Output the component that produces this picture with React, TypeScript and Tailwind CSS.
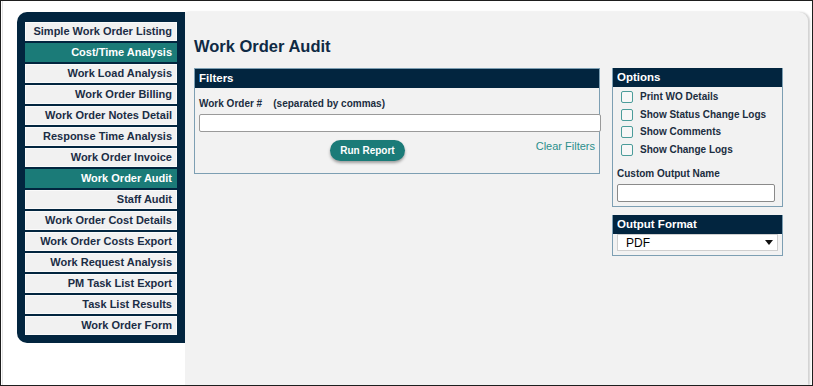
import React from "react";

const items = [
  { t: "Simple Work Order Listing" },
  { t: "Cost/Time Analysis", a: true },
  { t: "Work Load Analysis" },
  { t: "Work Order Billing" },
  { t: "Work Order Notes Detail" },
  { t: "Response Time Analysis" },
  { t: "Work Order Invoice" },
  { t: "Work Order Audit", a: true },
  { t: "Staff Audit" },
  { t: "Work Order Cost Details" },
  { t: "Work Order Costs Export" },
  { t: "Work Request Analysis" },
  { t: "PM Task List Export" },
  { t: "Task List Results" },
  { t: "Work Order Form" },
];

const opts = ["Print WO Details", "Show Status Change Logs", "Show Comments", "Show Change Logs"];

export default function App() {
  return (
    <div
      className="w-[813px] h-[386px] border border-[#1e1e1e] bg-white overflow-hidden flex"
      style={{ fontFamily: '"Liberation Sans", Arial, sans-serif' }}
    >
      <div className="w-[2px] border-r border-[#e4e4e4] mr-[14px]" />
      <div className="mt-[11px] w-[168px] h-[331px] bg-[#02253f] rounded-l-[10px] pt-[10px] pl-[8px] pr-[8px] flex flex-col gap-[2px]">
        {items.map((it) => (
          <div
            key={it.t}
            className={
              "h-[19px] flex items-center justify-end pr-[4px] text-[11px] font-bold leading-none border whitespace-nowrap " +
              (it.a
                ? "bg-[#1b7b78] text-white border-[#1b7b78]"
                : "bg-[#f1f1f1] text-[#1b2d45] border-[#fafafa]")
            }
          >
            {it.t}
          </div>
        ))}
      </div>
      <div className="mt-[11px] flex-1 mr-[4px] bg-[#f2f2f2] rounded-tr-[9px] shadow-[2px_0_2px_rgba(0,0,0,0.18)] pl-[9px] pt-[24px]">
        <div className="text-[16.5px] font-bold text-[#0f2a44] leading-[20px]">Work Order Audit</div>
        <div className="flex gap-[12px] mt-[12px] items-start">
          <div className="w-[406px] h-[106px] border border-[#7d9fb3] relative">
            <div className="h-[19px] bg-[#02253f] text-white text-[11.5px] font-bold pl-[4px] flex items-center">Filters</div>
            <div className="pl-[4px] pt-[11px] text-[10px] font-bold text-[#1b2d3f] leading-none whitespace-pre">
              {"Work Order #    (separated by commas)"}
            </div>
            <div className="absolute left-[4px] top-[45px] w-[402px] h-[18px] bg-white border border-[#9a9a9a] rounded-[2px]" />
            <div className="absolute left-[135px] top-[71px] w-[75px] h-[21px] rounded-full bg-[#1b7b78] text-white text-[10px] font-bold flex items-center justify-center shadow-[0_2px_3px_rgba(0,0,0,0.35)]">
              Run Report
            </div>
            <div className="absolute right-[4px] top-[72px] text-[11px] text-[#2b8f8c] leading-none">Clear Filters</div>
          </div>
          <div className="flex flex-col gap-[8px]">
            <div className="w-[171px] h-[139px] border border-[#7d9fb3] border-t-0 relative">
              <div className="h-[19px] bg-[#02253f] text-white text-[11.5px] font-bold pl-[4px] flex items-center">Options</div>
              <div className="flex flex-col pt-[4px] gap-[5.5px] pl-[8px]">
                {opts.map((o) => (
                  <div key={o} className="flex items-center h-[12px]">
                    <div className="w-[12px] h-[12px] border border-[#4b9c9a] rounded-[2px] bg-[#f7f7f7]" />
                    <span className="ml-[7px] text-[10px] font-bold text-[#1b2d3f] leading-none">{o}</span>
                  </div>
                ))}
              </div>
              <div className="pl-[4px] mt-[13px] text-[10px] font-bold text-[#1b2d3f] leading-none">Custom Output Name</div>
              <div className="ml-[4px] mt-[5px] w-[158px] h-[18px] bg-white border border-[#8a8a8a] rounded-[2px]" />
            </div>
            <div className="w-[171px] h-[41px] border border-[#7d9fb3] border-t-0">
              <div className="h-[19px] bg-[#02253f] text-white text-[11.5px] font-bold pl-[4px] flex items-center">Output Format</div>
              <div className="ml-[4px] w-[161px] h-[17px] bg-white border border-[#cfcfcf] flex items-center justify-between pl-[8px] pr-[4px] text-[12px] text-black">
                <span>PDF</span>
                <svg width="8" height="5" viewBox="0 0 8 5"><path d="M0 0h8L4 5z" fill="#111" /></svg>
              </div>
            </div>
          </div>
        </div>
      </div>
    </div>
  );
}
